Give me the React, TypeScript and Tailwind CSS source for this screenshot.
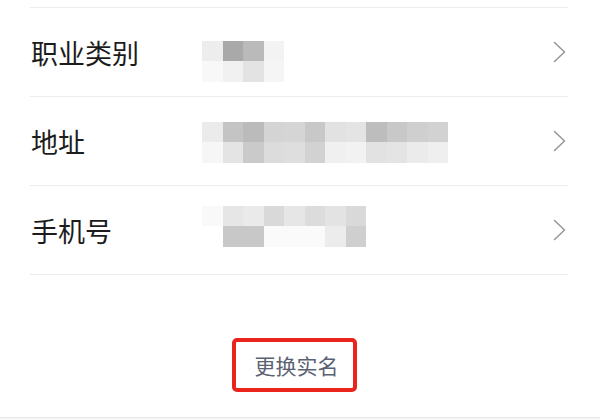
import React from "react";

type Row = { label: string; top: string[]; bottom: string[]; offset: number };

const rows: Row[] = [
  {
    label: "职业类别",
    top: ["#ededed", "#a9a9a9", "#bababa", "#f3f3f3"],
    bottom: ["#f8f8f8", "#f1f1f1", "#e3e3e3", "#f5f5f5"],
    offset: 9,
  },
  {
    label: "地址",
    top: ["#ebebeb", "#c4c4c4", "#bbbbbb", "#d4d4d4", "#d5d5d5", "#c8c8c8", "#e2e2e2", "#e4e4e4", "#bdbdbd", "#c8c8c8", "#cfcfcf", "#d2d2d2"],
    bottom: ["#f6f6f6", "#e4e4e4", "#cacaca", "#dcdcdc", "#dedede", "#d2d2d2", "#f0f0f0", "#f2f2f2", "#e2e2e2", "#e4e4e4", "#ebebeb", "#efefef"],
    offset: 1,
  },
  {
    label: "手机号",
    top: ["#f9f9f9", "#e6e6e6", "#eaeaea", "#d9d9d9", "#e6e6e6", "#dcdcdc", "#e3e3e3", "#d9d9d9"],
    bottom: ["#ffffff", "#c8c8c8", "#c8c8c8", "#fafafa", "#fafafa", "#fafafa", "#ececec", "#cfcfcf"],
    offset: -4,
  },
];

function Chevron() {
  return (
    <svg width="13" height="22" viewBox="0 0 13 22" fill="none">
      <polyline points="1.5,1.5 11.5,11 1.5,20.5" stroke="#999999" strokeWidth="1.6" strokeLinecap="round" strokeLinejoin="round" />
    </svg>
  );
}

function Mosaic({ top, bottom, offset }: { top: string[]; bottom: string[]; offset: number }) {
  return (
    <div className="flex flex-col" style={{ marginTop: offset * 2 }}>
      <div className="flex">
        {top.map((c, i) => (
          <div key={i} className="w-[20.5px] h-[20.5px]" style={{ backgroundColor: c }} />
        ))}
      </div>
      <div className="flex">
        {bottom.map((c, i) => (
          <div key={i} className="w-[20.5px] h-[20.5px]" style={{ backgroundColor: c }} />
        ))}
      </div>
    </div>
  );
}

export default function App() {
  return (
    <div
      className="w-[600px] h-[420px] bg-white flex flex-col overflow-hidden"
      style={{ fontFamily: '"Noto Sans CJK SC", "Noto Sans", sans-serif' }}
    >
      <div className="ml-[30px] w-[538px] mt-[7px] border-t border-[#ececec]">
        {rows.map((r) => (
          <div key={r.label} className="h-[89px] border-b border-[#ececec] flex items-center">
            <div className="w-[172px] pl-[1px] text-[27px] leading-none text-[#1c1c1c]">{r.label}</div>
            <div className="flex-1">
              <Mosaic top={r.top} bottom={r.bottom} offset={r.offset} />
            </div>
            <div className="pr-[2px] flex items-center">
              <Chevron />
            </div>
          </div>
        ))}
      </div>
      <div className="flex justify-center mt-[63px] pr-[12px]">
        <div className="w-[125px] h-[54px] border-[4px] border-[#e8241c] rounded-[5px] flex items-center justify-center pl-[5px]">
          <span className="text-[21px] leading-none text-[#5b6172]">更换实名</span>
        </div>
      </div>
      <div className="mt-auto h-[3px] border-t border-[#e6e6e6] bg-[#f7f7f7]" />
    </div>
  );
}
